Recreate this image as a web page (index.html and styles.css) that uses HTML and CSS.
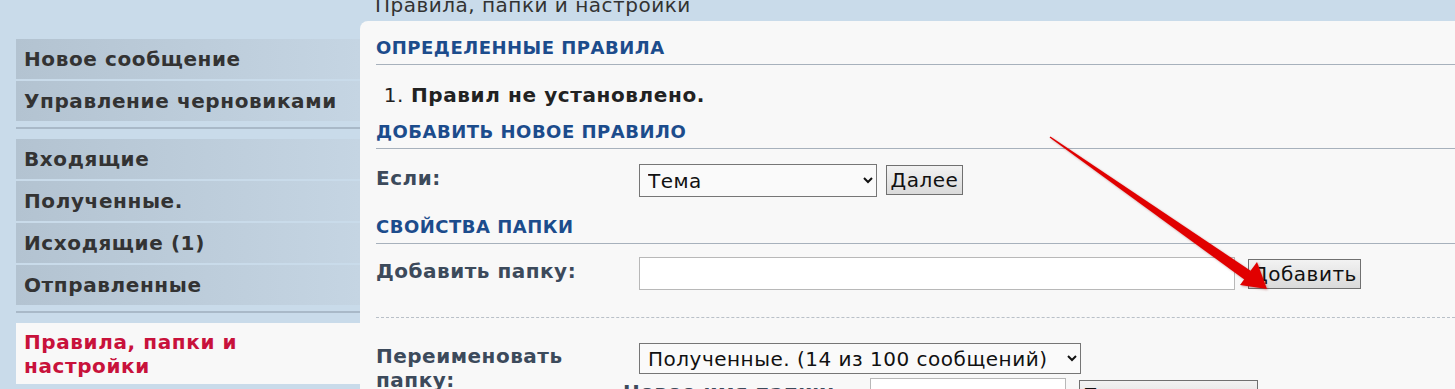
FILE: index.html
```html
<!DOCTYPE html>
<html lang="ru">

<head>
  <meta charset="UTF-8">
  <title>Правила, папки и настройки</title>
  <link rel="stylesheet" href="styles.css">
</head>

<body>
  <div class="layout">
    <!-- Sidebar -->
    <nav class="sidebar">
      <div class="nav-group">
        <a class="nav-item">Новое сообщение</a>
        <a class="nav-item">Управление черновиками</a>
      </div>
      <div class="nav-group">
        <a class="nav-item">Входящие</a>
        <a class="nav-item">Полученные.</a>
        <a class="nav-item">Исходящие (1)</a>
        <a class="nav-item">Отправленные</a>
      </div>
      <div class="nav-group">
        <a class="nav-item active">Правила, папки и настройки</a>
      </div>
    </nav>

    <!-- Main -->
    <main class="main">
      <div class="page-title">
        <h1>Правила, папки и настройки</h1>
      </div>
      <div class="panel">
        <h2 class="section-title first">Определенные правила</h2>
        <ol class="rules">
          <li><strong>Правил не установлено.</strong></li>
        </ol>

        <h2 class="section-title">Добавить новое правило</h2>
        <div class="form-row rule-row">
          <label class="form-label">Если:</label>
          <select class="select select-rule">
            <option>Тема</option>
          </select>
          <button class="btn btn-next">Далее</button>
        </div>

        <h2 class="section-title folder-title">Свойства папки</h2>
        <div class="form-row add-row">
          <label class="form-label">Добавить папку:</label>
          <input class="input input-add" type="text">
          <button class="btn btn-add">Добавить</button>
        </div>

        <div class="divider"></div>

        <div class="form-row rename-row">
          <label class="form-label">Переименовать папку:</label>
          <select class="select select-folder">
            <option>Полученные. (14 из 100 сообщений)</option>
          </select>
        </div>
        <div class="form-row newname-row">
          <label class="sub-label">Новое имя папки:</label>
          <input class="input input-newname" type="text">
          <button class="btn btn-rename">Переименовать</button>
        </div>
      </div>
    </main>
  </div>

  <!-- Annotation arrow -->
  <svg class="arrow" width="1455" height="389" viewBox="0 0 1455 389">
    <polygon fill="#e10000" points="1049.6,137.6 1050.4,136.4 1251,271 1245,280" />
    <polygon fill="#e10000" points="1267,289 1257,262 1240,285" />
  </svg>
</body>

</html>
```

FILE: styles.css
```css
body {
  margin: 0;
  background: #c9dbea;
  font-family: "DejaVu Sans", Verdana, sans-serif;
  color: #333;
  overflow: hidden;
}

.layout {
  display: flex;
  align-items: flex-start;
}

/* Sidebar */
.sidebar {
  width: 344px;
  margin-left: 16px;
  margin-top: 39px;
  flex-shrink: 0;
}

.nav-group {
  display: flex;
  flex-direction: column;
  gap: 2px;
  padding-bottom: 6px;
  border-bottom: 2px solid #a9b9c8;
  margin-bottom: 10px;
}

.nav-group:last-child {
  border-bottom: none;
}

.nav-item {
  display: block;
  height: 40px;
  line-height: 41px;
  padding-left: 8px;
  font-size: 20px;
  letter-spacing: 0.6px;
  font-weight: bold;
  color: #333;
  background: linear-gradient(to right, #b3c3d1, #c5d5e3);
  white-space: nowrap;
}

.nav-item.active {
  height: auto;
  line-height: 24px;
  padding: 7px 60px 6px 8px;
  white-space: normal;
  color: #c8123b;
  background: #f8f8f8;
}

/* Main */
.main {
  flex: 1;
  min-width: 0;
}

.page-title {
  height: 21px;
  overflow: hidden;
}

.page-title h1 {
  margin: -7px 0 0 15px;
  font-size: 20px;
  letter-spacing: 0.5px;
  line-height: 24px;
  font-weight: normal;
  color: #333;
  white-space: nowrap;
}

.panel {
  background: #f8f8f8;
  border-top-left-radius: 8px;
  padding: 0 0 40px 16px;
  height: 400px;
}

.section-title {
  margin: 0;
  margin-top: 15px;
  padding-bottom: 6px;
  font-size: 18px;
  letter-spacing: 0.5px;
  line-height: 20px;
  font-weight: bold;
  text-transform: uppercase;
  color: #1c4c8c;
  border-bottom: 1px solid #a7b1bc;
}

.section-title.first {
  margin-top: 0;
  padding-top: 17px;
}

.section-title.folder-title {
  margin-top: 20px;
}

.rules {
  margin: 18px 0 0 0;
  padding-left: 35px;
  font-size: 20px;
  letter-spacing: 0.6px;
  line-height: 24px;
  color: #222;
}

/* Form rows */
.form-row {
  display: flex;
  align-items: flex-start;
}

.form-label {
  width: 263px;
  flex-shrink: 0;
  padding-top: 2px;
  font-size: 20px;
  letter-spacing: 0.5px;
  line-height: 24px;
  font-weight: bold;
  color: #3c4a5b;
}

.rule-row {
  margin-top: 15px;
}

.add-row {
  margin-top: 13px;
}

.rename-row {
  margin-top: 25px;
}

.rename-row .form-label {
  width: 240px;
  margin-right: 23px;
  padding-top: 1px;
}

.newname-row {
  margin-top: -14px;
  padding-left: 247px;
}

.sub-label {
  width: 232px;
  flex-shrink: 0;
  padding-top: 2px;
  font-size: 20px;
  letter-spacing: 0.5px;
  line-height: 24px;
  font-weight: bold;
  color: #3c4a5b;
  white-space: nowrap;
}

.select,
.input,
.btn {
  font-family: "DejaVu Sans", Verdana, sans-serif;
  font-size: 20px;
  letter-spacing: 0.5px;
  color: #111;
  box-sizing: border-box;
  margin: 0;
}

.select {
  border: 1px solid #767676;
  border-radius: 0;
  background: #fafafa;
  padding: 0 4px;
}

.select-rule {
  width: 238px;
  height: 33px;
}

.select-folder {
  width: 442px;
  height: 31px;
}

.input {
  height: 33px;
  border: 1px solid #b8b8b8;
  background: #fff;
  border-radius: 0;
}

.input-add {
  width: 596px;
}

.input-newname {
  width: 196px;
  margin-left: 15px;
}

.btn {
  height: 30px;
  padding: 0 3px;
  border: 1px solid #707070;
  border-radius: 0;
  background: linear-gradient(#f2f2f2, #dadada);
  line-height: 26px;
}

.btn-next {
  width: 77px;
  margin-left: 9px;
  margin-top: 1px;
}

.btn-add {
  width: 113px;
  margin-left: 13px;
  margin-top: 2px;
}

.btn-rename {
  width: 179px;
  margin-left: 13px;
  margin-top: 2px;
}

.divider {
  margin-top: 27px;
  border-top: 1px dashed #b9c0c8;
}

/* Annotation */
.arrow {
  position: absolute;
  top: 0;
  left: 0;
  pointer-events: none;
  filter: drop-shadow(1px 1px 1px rgba(120, 0, 0, 0.35));
}
```
